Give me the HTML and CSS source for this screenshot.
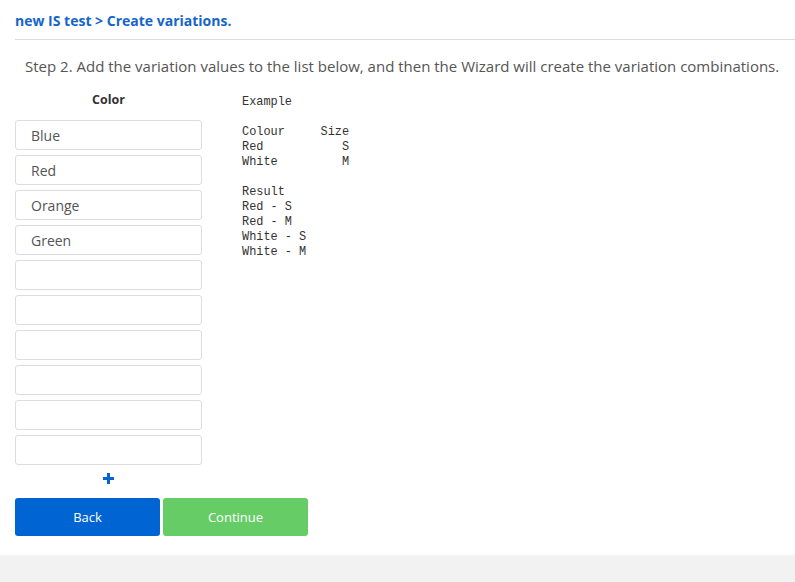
FILE: index.html
```html
<!DOCTYPE html>
<html>
<head>
<meta charset="utf-8">
<link rel="stylesheet" href="styles.css">
</head>
<body>
<div class="card">
  <div class="header"><a class="crumb">new IS test &gt; Create variations.</a></div>
  <p class="step">Step 2. Add the variation values to the list below, and then the Wizard will create the variation combinations.</p>
  <div class="main">
    <div class="col">
      <div class="col-title">Color</div>
      <div class="inputs">
        <input class="field" value="Blue">
        <input class="field" value="Red">
        <input class="field" value="Orange">
        <input class="field" value="Green">
        <input class="field" value="">
        <input class="field" value="">
        <input class="field" value="">
        <input class="field" value="">
        <input class="field" value="">
        <input class="field" value="">
      </div>
      <div class="add">
        <svg width="11" height="11" viewBox="0 0 11 11"><path d="M4 0h3v4h4v3H7v4H4V7H0V4h4z" fill="#0a63d2"/></svg>
      </div>
    </div>
    <pre class="example">Example

Colour     Size
Red           S
White         M

Result
Red - S
Red - M
White - S
White - M</pre>
  </div>
  <div class="buttons">
    <button class="btn back">Back</button>
    <button class="btn continue">Continue</button>
  </div>
</div>
</body>
</html>
```
FILE: styles.css
```css
body {
  margin: 0;
  background: #f2f2f2;
  font-family: "Open Sans", sans-serif;
}
.card {
  background: #fff;
  padding: 0 0 19px 15px;
  box-shadow: 0 2px 7px rgba(0,0,0,0.16);
}
.header {
  padding-top: 9px;
  box-sizing: border-box;
  border-bottom: 1px solid #dcdcdc;
  height: 40px;
}
.crumb {
  font-size: 14px;
  font-weight: 700;
  line-height: 20px;
  color: #1565cc;
}
.step {
  margin: 16px 0 0 10px;
  font-size: 15px;
  line-height: 20px;
  color: #555;
}
.main {
  display: flex;
  margin-top: 14px;
}
.col {
  width: 187px;
}
.col-title {
  text-align: center;
  font-size: 12.5px;
  font-weight: 700;
  color: #333;
  line-height: 20px;
}
.inputs {
  display: flex;
  flex-direction: column;
  gap: 5px;
  margin-top: 10px;
}
.field {
  box-sizing: border-box;
  width: 187px;
  height: 30px;
  margin: 0;
  border: 1px solid #dddddd;
  border-radius: 3px;
  padding: 0 15px;
  font-family: "Open Sans", sans-serif;
  font-size: 14px;
  color: #555;
  outline: none;
}
.add {
  height: 33px;
  display: flex;
  justify-content: center;
  align-items: center;
  padding-bottom: 6px;
  box-sizing: border-box;
}
.example {
  margin: 5px 0 0 40px;
  font-family: "Liberation Mono", monospace;
  font-size: 11.9px;
  line-height: 15px;
  color: #333;
}
.buttons {
  display: flex;
  gap: 3px;
}
.btn {
  width: 145px;
  height: 38px;
  border: none;
  border-radius: 3px;
  color: #fff;
  font-family: "Open Sans", sans-serif;
  font-size: 13px;
}
.back { background: #0064d2; }
.continue { background: #66cc66; }
```
